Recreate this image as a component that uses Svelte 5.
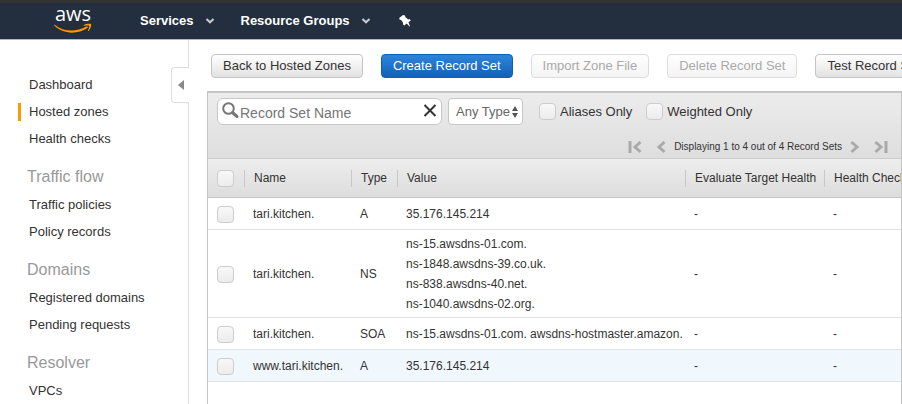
<script>
  const groups = [
    { title: '', items: ['Dashboard', 'Hosted zones', 'Health checks'] },
    { title: 'Traffic flow', items: ['Traffic policies', 'Policy records'] },
    { title: 'Domains', items: ['Registered domains', 'Pending requests'] },
    { title: 'Resolver', items: ['VPCs'] }
  ];
  const current = 'Hosted zones';

  const columns = ['Name', 'Type', 'Value', 'Evaluate Target Health', 'Health Check ID'];
  const records = [
    { name: 'tari.kitchen.', type: 'A', values: ['35.176.145.214'] },
    {
      name: 'tari.kitchen.',
      type: 'NS',
      values: ['ns-15.awsdns-01.com.', 'ns-1848.awsdns-39.co.uk.', 'ns-838.awsdns-40.net.', 'ns-1040.awsdns-02.org.']
    },
    { name: 'tari.kitchen.', type: 'SOA', values: ['ns-15.awsdns-01.com. awsdns-hostmaster.amazon.'] },
    { name: 'www.tari.kitchen.', type: 'A', values: ['35.176.145.214'], active: true }
  ];
</script>

{#snippet chevron()}
  <svg class="chevron" width="10" height="6" viewBox="0 0 10 6" aria-hidden="true">
    <path d="M1.5 1 L5 4.3 L8.500 1" />
  </svg>
{/snippet}

<div class="app">
  <header>
    <a class="logo" href="#home" aria-label="Home">
      <span>aws</span>
      <svg width="38" height="11" viewBox="0 0 38 11" aria-hidden="true">
        <path d="M0.600 1.700 C9 8.800 22 9.600 32.300 3.600 C33.800 2.900 34.500 4.100 33.300 5 C23.500 11.800 8.500 11.200 0.300 2.600 C-0.200 2 0.200 1.400 0.600 1.700 Z" />
        <path d="M29.800 2.100 C31.900 0.500 36.300 0.300 37 1.100 C37.600 2 36.700 5.900 34.700 7.900 C34.200 8.300 33.800 8.100 34 7.500 C34.700 5.900 35.500 3.300 35.100 2.700 C34.600 2.100 32 2.500 30.300 2.700 C29.600 2.800 29.400 2.400 29.800 2.100 Z" />
      </svg>
    </a>
    <nav class="top">
      <button type="button">Services {@render chevron()}</button>
      <button type="button">Resource Groups {@render chevron()}</button>
      <button type="button" aria-label="Pin shortcuts">
        <svg width="12" height="12" viewBox="0 0 12 12" aria-hidden="true">
          <path fill="#fff" d="M4 0 L6 0.600 L6.300 2.100 L9.200 4.400 L10.600 4.100 L11.800 5.500 L9.400 7.300 L11 11.300 L10.500 11.600 L7.700 8.600 L5.200 10.500 L3.900 9.300 L4.100 7.800 L2.200 4.900 L0.700 4.700 L0.200 3 Z" />
        </svg>
      </button>
    </nav>
  </header>

  <div class="body">
    <aside>
      <nav>
        {#each groups as group}
          {#if group.title}<h2>{group.title}</h2>{/if}
          <ul>
            {#each group.items as item}
              <li><a href="#nav" class:current={item === current}>{item}</a></li>
            {/each}
          </ul>
        {/each}
      </nav>
      <button class="collapse" type="button" aria-label="Collapse menu">
        <svg width="6" height="10" viewBox="0 0 6 10" aria-hidden="true"><path fill="#888" d="M6 0 V10 L0 5 Z" /></svg>
      </button>
    </aside>

    <main>
      <div class="actions">
        <button type="button">Back to Hosted Zones</button>
        <button type="button" class="primary">Create Record Set</button>
        <button type="button" disabled>Import Zone File</button>
        <button type="button" disabled>Delete Record Set</button>
        <button type="button">Test Record Set</button>
      </div>

      <section class="panel">
        <div class="toolbar">
          <div class="filters">
            <div class="search">
              <svg width="18" height="22" viewBox="0 0 18 22" fill="none" stroke="#777" aria-hidden="true">
                <circle cx="6.500" cy="7.500" r="5.300" stroke-width="2" />
                <path d="M11 12 L15 15.500" stroke-width="3" stroke-linecap="round" />
              </svg>
              <input type="text" placeholder="Record Set Name" aria-label="Record Set Name" />
              <button type="button" aria-label="Clear">
                <svg width="14" height="16" viewBox="0 0 14 16" fill="none" stroke="#333" stroke-width="2" aria-hidden="true">
                  <path d="M1.500 1 L12.500 12 M12.500 1 L1.500 12" />
                </svg>
              </button>
            </div>
            <div class="type">
              <select aria-label="Record type"><option>Any Type</option></select>
              <svg width="6" height="12" viewBox="0 0 6 12" fill="#555" aria-hidden="true">
                <path d="M3 0 L6 5 H0 Z M0 7 H6 L3 12 Z" />
              </svg>
            </div>
            <label><input type="checkbox" />Aliases Only</label>
            <label><input type="checkbox" />Weighted Only</label>
          </div>

          <div class="pager">
            <button type="button" aria-label="First page">
              <svg width="14" height="14" viewBox="0 0 14 14" aria-hidden="true"><path d="M2 1 V13 M12.500 2 L7 7 L12.500 12" /></svg>
            </button>
            <button type="button" aria-label="Previous page">
              <svg width="10" height="14" viewBox="0 0 10 14" aria-hidden="true"><path d="M8.500 2 L3 7 L8.500 12" /></svg>
            </button>
            <span>Displaying 1 to 4 out of 4 Record Sets</span>
            <button type="button" aria-label="Next page">
              <svg width="10" height="14" viewBox="0 0 10 14" aria-hidden="true"><path d="M1.500 2 L7 7 L1.500 12" /></svg>
            </button>
            <button type="button" aria-label="Last page">
              <svg width="14" height="14" viewBox="0 0 14 14" aria-hidden="true"><path d="M12 1 V13 M1.500 2 L7 7 L1.500 12" /></svg>
            </button>
          </div>
        </div>

        <table>
          <colgroup>
            <col class="c-check" /><col class="c-name" /><col class="c-type" /><col class="c-value" /><col class="c-target" /><col class="c-health" />
          </colgroup>
          <thead>
            <tr>
              <th><input type="checkbox" aria-label="Select all" /></th>
              {#each columns as column}<th><span>{column}</span></th>{/each}
            </tr>
          </thead>
          <tbody>
            {#each records as record}
              <tr class:active={record.active}>
                <td><input type="checkbox" aria-label="Select {record.name} {record.type}" /></td>
                <td>{record.name}</td>
                <td>{record.type}</td>
                <td>{#each record.values as value}<div>{value}</div>{/each}</td>
                <td>-</td>
                <td>-</td>
              </tr>
            {/each}
          </tbody>
        </table>
      </section>
    </main>
  </div>
</div>

<style>
  :global(body) {
    margin: 0;
    background: #fff;
  }
  .app {
    display: flex;
    flex-direction: column;
    height: 100vh;
    overflow: hidden;
    font: 13px/20px 'Liberation Sans', Arial, sans-serif;
    color: #333;
  }
  .app * {
    box-sizing: border-box;
  }
  button,
  input,
  select {
    font: inherit;
    color: inherit;
    margin: 0;
  }
  svg {
    display: block;
    flex: none;
  }
  header {
    display: flex;
    flex: none;
    height: 40px;
    border-top: 3px solid #333;
    border-bottom: 1px solid #b5b8bd;
    background: #232f3e;
  }
  .logo {
    display: flex;
    flex-direction: column;
    align-items: center;
    width: 38px;
    margin-left: 54px;
    color: #fff;
    text-decoration: none;
  }
  .logo span {
    height: 20px;
    font: 20px/22px 'Open Sans', sans-serif;
  }
  .logo svg {
    fill: #f90;
  }
  .top {
    display: flex;
    align-items: center;
    gap: 26px;
    margin-left: 48px;
  }
  .top button {
    display: flex;
    align-items: center;
    gap: 11px;
    padding: 0;
    border: 0;
    background: none;
    color: #fff;
    font-weight: bold;
  }
  .top button:last-child {
    margin-left: 2px;
  }
  .chevron {
    fill: none;
    stroke: #ccc;
    stroke-width: 2;
  }
  .body {
    display: flex;
    flex: 1;
    min-height: 0;
  }
  aside {
    position: relative;
    flex: none;
    width: 189px;
    padding-top: 32px;
    border-right: 1px solid #ddd;
  }
  ul {
    margin: 0;
    padding: 0;
    list-style: none;
  }
  li {
    padding: 4px 0 5px 18px;
  }
  li a {
    display: block;
    padding-left: 8px;
    border-left: 3px solid transparent;
    line-height: 18px;
    color: #333;
    text-decoration: none;
  }
  li a.current {
    border-color: #f90;
  }
  h2 {
    margin: 12px 0 4px 27px;
    font-size: 16px;
    font-weight: normal;
    line-height: 23px;
    color: #999;
  }
  .collapse {
    position: absolute;
    top: 27px;
    right: -1px;
    display: flex;
    align-items: center;
    justify-content: center;
    width: 18px;
    height: 36px;
    padding: 0;
    border: 1px solid #ddd;
    border-right: 0;
    border-radius: 4px 0 0 4px;
    background: #fff;
  }
  main {
    display: flex;
    flex: 1;
    flex-direction: column;
    min-width: 0;
    padding: 14px 0 0 18px;
  }
  .actions {
    display: flex;
    gap: 18px;
    margin: 0 0 13px 4px;
    overflow: hidden;
  }
  .actions button {
    flex: none;
    height: 24px;
    padding: 0 11px;
    border: 1px solid #c4c4c4;
    border-radius: 4px;
    background: linear-gradient(#fff, #e2e2e2);
    line-height: 20px;
  }
  .actions .primary {
    border-color: #0d5fb8;
    background: linear-gradient(#2f84d8, #0f62bd);
    color: #fff;
  }
  .actions button:disabled {
    border-color: #ddd;
    background: linear-gradient(#fff, #f4f4f4);
    color: #aaa;
  }
  .panel {
    flex: 1;
    overflow: hidden;
    border: solid #c4c4c4;
    border-width: 2px 1px 0 1px;
  }
  .toolbar {
    height: 66px;
    padding: 5px 13px 0 9px;
    border-bottom: 1px solid #ccc;
    background: linear-gradient(#ececec, #dedede);
  }
  .filters {
    display: flex;
    align-items: center;
  }
  .search {
    display: flex;
    align-items: center;
    width: 225px;
    height: 27px;
    padding: 0 4px;
    border: 1px solid #c8c8c8;
    border-radius: 6px;
    background: #fff;
  }
  .search input {
    flex: 1;
    min-width: 0;
    padding: 2px 0 0;
    border: 0;
    background: none;
    font-size: 14px;
    outline: 0;
  }
  .search input::placeholder {
    color: #757575;
    opacity: 1;
  }
  .search button {
    padding: 0;
    border: 0;
    background: none;
  }
  .type {
    display: flex;
    align-items: center;
    width: 75px;
    height: 27px;
    margin: 0 16px 0 6px;
    padding: 0 4px 0 7px;
    border: 1px solid #c8c8c8;
    border-radius: 4px;
    background: #fff;
    color: #666;
  }
  .type select {
    flex: 1;
    min-width: 0;
    padding: 0;
    border: 0;
    background: none;
    appearance: none;
  }
  label {
    display: flex;
    align-items: center;
    gap: 4px;
    margin-right: 14px;
  }
  input[type='checkbox'] {
    display: block;
    appearance: none;
    width: 17px;
    height: 17px;
    border: 1px solid #ccc;
    border-radius: 4px;
    background: linear-gradient(#f8f8f8, #ececec);
  }
  .pager {
    display: flex;
    align-items: center;
    justify-content: flex-end;
    gap: 14px;
    margin-top: 12px;
    font-size: 10px;
  }
  .pager span {
    margin: 0 -6px;
  }
  .pager button {
    padding: 0;
    border: 0;
    background: none;
  }
  .pager svg {
    fill: none;
    stroke: #aaa;
    stroke-width: 3;
  }
  table {
    width: 100%;
    min-width: 740px;
    table-layout: fixed;
    border-collapse: separate;
    border-spacing: 0;
    font-size: 12px;
  }
  .c-check { width: 36px; }
  .c-name { width: 107px; }
  .c-type { width: 46px; }
  .c-target { width: 139px; }
  .c-health { width: 124px; }
  th,
  td {
    padding: 0 0 0 9px;
    border-bottom: 1px solid #e2e2e2;
    text-align: left;
    font-weight: normal;
    white-space: nowrap;
  }
  th {
    height: 39px;
    padding-left: 0;
    border-color: #c4c4c4;
  }
  th:first-child,
  td:first-child {
    padding-left: 9px;
  }
  thead tr {
    background: linear-gradient(#eee, #dcdcdc);
  }
  th span {
    display: block;
    padding-left: 9px;
    border-left: 1px solid #c8c8c8;
    line-height: 17px;
  }
  td {
    height: 32px;
    padding-top: 4px;
    padding-bottom: 3px;
  }
  .active {
    background: #f0f7fd;
  }
</style>
